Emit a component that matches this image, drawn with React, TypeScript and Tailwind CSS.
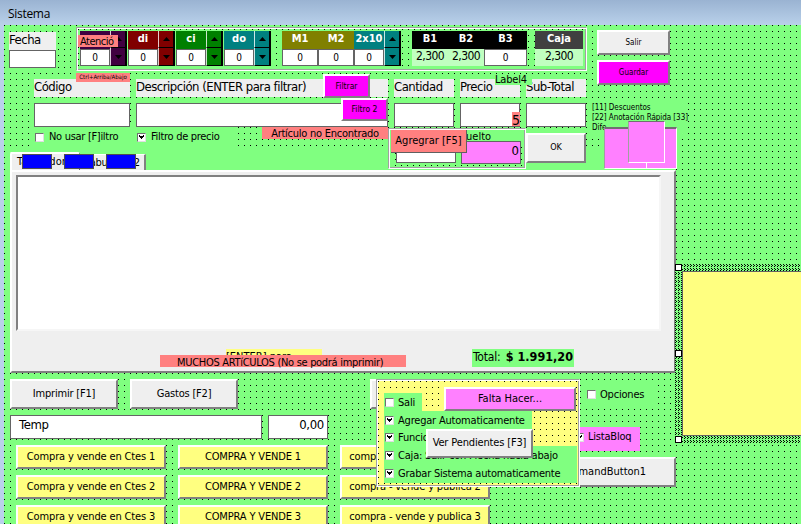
import type { ReactNode } from 'react';

const DOTS = 'bg-[conic-gradient(at_1px_1px,transparent_75%,#000_0)] bg-[length:6px_6px]';
const RAISED =
  'border-2 border-t-white border-l-white border-r-[#808080] border-b-[#808080]';
const ETCHED =
  'border border-[#a0a0a0] border-r-white border-b-white shadow-[inset_1px_1px_0_#fff,inset_-1px_-1px_0_#a0a0a0]';

function Button({ className, children }: { className: string; children?: ReactNode }) {
  return (
    <button className={`flex shrink-0 items-center justify-center whitespace-nowrap ${RAISED} ${className}`}>
      {children}
    </button>
  );
}

function Check({ on, className = '' }: { on?: boolean; className?: string }) {
  return (
    <span
      className={`flex h-[9px] w-[9px] shrink-0 items-center justify-center border border-t-[#707070] border-l-[#707070] border-r-[#e0e0e0] border-b-[#e0e0e0] bg-white ${className}`}
    >
      {on && (
        <svg width="5" height="5" viewBox="0 0 5 5" shapeRendering="crispEdges">
          <path d="M0 0h1v1h3v-1h1v2h-1v1h-1v1h-1v-1h-1v-1h-1z" fill="#000" />
        </svg>
      )}
    </span>
  );
}

function Spinner({ color }: { color: string }) {
  const half = 'flex w-full items-center justify-center border-b border-b-black border-l border-l-white/80 border-r-2 border-r-black';
  return (
    <div className={`flex h-[35px] w-[17px] shrink-0 flex-col ${color}`}>
      <div className={`h-[17px] ${half}`}>
        <svg width="7" height="4" viewBox="0 0 7 4"><path d="M0 4L3.5 0L7 4z" /></svg>
      </div>
      <div className={`h-[18px] ${half}`}>
        <svg width="7" height="4" viewBox="0 0 7 4"><path d="M0 0L3.5 4L7 0z" /></svg>
      </div>
    </div>
  );
}

function Cell({ label, value, color, className, plain }: { label: string; value: string; color: string; className: string; plain?: boolean }) {
  return (
    <div className={`flex shrink-0 flex-col ${className}`}>
      <div className={`h-[18px] text-center font-['DejaVu_Sans',sans-serif] text-[11px] leading-[15px] font-bold whitespace-nowrap text-white ${color}`}>
        {label}
      </div>
      {plain ? (
        <div className="h-[17px] bg-[#c0ffc0] text-center text-[12px] leading-[15px] tracking-[-0.6px]">{value}</div>
      ) : (
        <div className="h-[17px] border border-[#646464] bg-white text-center text-[10px] leading-[16px]">{value}</div>
      )}
    </div>
  );
}

function Field({ label, className }: { label: string; className: string }) {
  return (
    <div className={`flex shrink-0 flex-col gap-[6px] ${className}`}>
      <div className="h-[18px] bg-[#efefef] text-[13px] leading-[16px] tracking-[-0.5px] whitespace-nowrap">{label}</div>
      <div className="h-[24px] border border-[#646464] bg-white" />
    </div>
  );
}

function Option({ text, className, on = true }: { text: string; className: string; on?: boolean }) {
  return (
    <div className={`flex items-center gap-[4px] bg-[#80ff80] pl-px text-[11px] tracking-[-0.2px] whitespace-nowrap ${className}`}>
      <Check on={on} />
      <span className="pt-[2px]">{text}</span>
    </div>
  );
}

const trades = [
  ['Compra y vende en Ctes 1', 'COMPRA Y VENDE 1', 'compra - vende y publica 1'],
  ['Compra y vende en Ctes 2', 'COMPRA Y VENDE 2', 'compra - vende y publica 2'],
  ['Compra y vende en Ctes 3', 'COMPRA Y VENDE 3', 'compra - vende y publica 3'],
];

export default function App() {
  return (
    <div className="flex h-[524px] w-[801px] flex-col overflow-hidden bg-[#b9d1ea] font-['DejaVu_Sans_Condensed','DejaVu_Sans',sans-serif] text-black [font-stretch:condensed]">
      <header className="flex h-[25px] shrink-0 items-center bg-linear-to-b from-[#9ab3d2] to-[#b9d1ea] pt-[3px] pl-[8px] font-['Open_Sans',sans-serif] text-[12px] tracking-[-0.3px] [font-stretch:normal]">
        Sistema
      </header>

      <main className={`relative ml-[4px] h-[499px] overflow-hidden bg-[#80ff80] ${DOTS}`}>
        <section className="flex h-[54px] items-start">
          <div className="mt-[7px] ml-[5px] flex w-[47px] shrink-0 flex-col">
            <div className="h-[18px] bg-[#efefef] text-[13px] leading-[16px] tracking-[-0.5px]">Fecha</div>
            <div className="h-[18px] border border-[#646464] bg-white" />
          </div>

          <div className={`mt-[2px] ml-[20px] flex h-[44px] w-[511px] shrink-0 bg-[#80ff80] pt-[3px] pl-[3px] ${DOTS} bg-origin-content bg-position-[-2px_-2px] ${ETCHED}`}>
            <Cell label="" value="0" color="bg-[#400040]" className="w-[30px]" />
            <Spinner color="bg-[#400040]" />
            <Cell label="di" value="0" color="bg-[#800000]" className="ml-px w-[30px]" />
            <Spinner color="bg-[#800000]" />
            <Cell label="ci" value="0" color="bg-[#008000]" className="ml-px w-[30px]" />
            <Spinner color="bg-[#008000]" />
            <Cell label="do" value="0" color="bg-[#008080]" className="ml-px w-[30px]" />
            <Spinner color="bg-[#008080]" />
            <Cell label="M1" value="0" color="bg-[#808000]" className="ml-[11px] w-[36px]" />
            <Cell label="M2" value="0" color="bg-[#808000]" className="w-[36px]" />
            <Cell label="2x10" value="0" color="bg-[#008080]" className="w-[30px]" />
            <Spinner color="bg-[#008080]" />
            <Cell label="B1" value="2,300" color="bg-black" className="ml-[11px] w-[36px]" plain />
            <Cell label="B2" value="2,300" color="bg-black" className="w-[36px]" plain />
            <Cell label="B3" value="0" color="bg-black" className="w-[43px]" />
            <Cell label="Caja" value="2,300" color="bg-[#404040]" className="ml-[8px] w-[48px]" plain />
          </div>

          <div className="mt-[5px] ml-[10px] flex flex-col gap-[5px]">
            <Button className="h-[25px] w-[73px] bg-[#efefef] text-[8px]">Salir</Button>
            <Button className="h-[25px] w-[73px] bg-[#ff00ff] text-[8px]">Guardar</Button>
          </div>
        </section>

        <section className="flex h-[48px] gap-[6px] pl-[30px]">
          <Field label="Código" className="w-[96px]" />
          <Field label="Descripción (ENTER para filtrar)" className="w-[252px]" />
          <Field label="Cantidad" className="w-[60px]" />
          <Field label="Precio" className="w-[60px]" />
          <Field label="Sub-Total" className="w-[60px]" />
          <div className="mt-[24px] h-[36px] w-[96px] shrink-0 bg-[#80ff80] text-[8px] leading-[10px] tracking-[-0.05px] whitespace-nowrap">
            [11] Descuentos
            <br />
            [22] Anotación Rápida [33]
            <br />
            Dife
          </div>
        </section>

        <section className="flex h-[24px] pl-[30px]">
          <div className="flex w-[203px] items-center bg-[#80ff80] pb-[4px] pl-px text-[11px] tracking-[-0.3px] whitespace-nowrap">
            <Check />
            <span className="ml-[5px] w-[88px]">No usar [F]iltro</span>
            <Check on />
            <span className="ml-[5px]">Filtro de precio</span>
          </div>
        </section>

        <section className="ml-[6px] flex h-[222px] w-[666px] flex-col bg-[#80ff80]">
          <div className="flex h-[19px] items-end text-[11px] whitespace-nowrap">
            <div className="h-[18px] w-[70px] overflow-hidden rounded-t-[2px] border-t-2 border-r border-l-2 border-white border-r-[#646464] bg-[#efefef] pl-[5px] leading-[15px] tracking-[0.1px]">
              Tabulador
            </div>
            <div className="h-[16px] w-[66px] overflow-hidden border-t border-r-2 border-t-white border-r-[#808080] bg-[#efefef] pl-[6px] leading-[15px] tracking-[-0.35px]">
              Tabulador 2
            </div>
          </div>
          <div className="flex h-[203px] flex-col border-t-2 border-r-2 border-b-2 border-l-2 border-white border-r-[#808080] border-b-[#808080] bg-[#efefef] pt-[3px] pl-[4px]">
            <div className="h-[156px] w-[645px] border-2 border-t-[#808080] border-r-[#f6f6f6] border-b-[#f6f6f6] border-l-[#808080] bg-white" />
            <div className="mt-[18px] ml-[456px] flex h-[18px] w-[102px] items-center justify-between bg-[#80ff80] px-px pb-[2px] text-[12px] whitespace-nowrap">
              <span className="tracking-[-0.2px]">Total:</span>
              <b className="text-[12.5px]">$ 1.991,20</b>
            </div>
          </div>
        </section>

        <section className="flex h-[42px] gap-[12px] pt-[6px] pl-[6px] text-[11px] tracking-[-0.2px]">
          <Button className="h-[30px] w-[108px] bg-[#efefef]">Imprimir [F1]</Button>
          <Button className="h-[30px] w-[108px] bg-[#efefef]">Gastos [F2]</Button>
          <Button className="ml-[120px] h-[30px] w-[108px] bg-[#efefef]" />
        </section>

        <section className="flex h-[30px] gap-[6px] pl-[6px] text-[13px] leading-[18px]">
          <div className="h-[24px] w-[252px] border border-[#646464] bg-white pl-[8px] tracking-[-0.3px]">Temp</div>
          <div className="h-[24px] w-[60px] border border-[#646464] bg-white pr-[3px] text-right tracking-[-0.3px]">0,00</div>
        </section>

        <section className="flex flex-col gap-[6px] pl-[12px] text-[11px] tracking-[-0.15px]">
          {trades.map((row) => (
            <div key={row[0]} className="flex gap-[12px]">
              {row.map((name) => (
                <Button key={name} className="h-[24px] w-[150px] bg-[#ffff80] pt-px">{name}</Button>
              ))}
            </div>
          ))}
        </section>

        {/* Controls dropped freely over the form */}
        <div className="absolute top-[10px] left-[74px] h-[12px] w-[40px] bg-[#ff8080] pl-[2px] text-[11px] leading-[13px] tracking-[-0.5px]">Atenció</div>
        <div className="absolute top-[48px] left-[72px] h-[9px] w-[54px] bg-[#ff8080] text-center text-[6px] leading-[8px] whitespace-nowrap">Ctrl+Arriba/Abajo</div>
        <Button className="absolute top-[49px] left-[319px] h-[24px] w-[47px] bg-[#ff00ff] text-[8.5px]">Filtrar</Button>
        <Button className="absolute top-[73px] left-[337px] h-[23px] w-[47px] bg-[#ff00ff] text-[8.5px]">Filtro 2</Button>
        <div className="absolute top-[50px] left-[491px] h-[10px] w-[37px] bg-[#80ff80] text-[11px] leading-[10px] tracking-[-0.2px]">Label4</div>
        <div className="absolute top-[87px] left-[508px] h-[14px] w-[8px] bg-[#ff8080] text-[14px] leading-[17px]">5</div>
        <div className="absolute top-[102px] left-[258px] h-[12px] w-[126px] bg-[#ff8080] text-center text-[11px] leading-[14px] tracking-[-0.25px] whitespace-nowrap">Artículo no Encontrado</div>

        <div className={`absolute top-[103px] left-[384px] h-[41px] w-[138px] bg-[#80ff80] ${DOTS} ${ETCHED}`}>
          <div className="absolute top-[12px] left-[7px] h-[22px] w-[60px] border border-[#646464] bg-white" />
          <div className="absolute top-[1px] left-[71px] h-[12px] w-[62px] bg-[#80ff80] text-[11px] leading-[14px]">Vuelto</div>
          <div className="absolute top-[12px] left-[72px] h-[23px] w-[60px] border border-[#646464] bg-[#ff80ff] pr-px text-right text-[13px] leading-[17px]">0</div>
          <div className="absolute top-px left-[2px] flex h-[23px] w-[76px] items-center justify-center border-r border-b border-[#606060] bg-[#ff8080] text-[11px] whitespace-nowrap">Agregrar [F5]</div>
        </div>
        <Button className="absolute top-[108px] left-[522px] h-[30px] w-[60px] bg-[#efefef] text-[9px]">OK</Button>

        <div className="absolute top-[102px] left-[600px] h-[42px] w-[73px] border border-t-2 border-t-[#707070] border-r-white border-b-white border-l-[#a0a0a0] bg-[#ff80ff]">
          <div className="absolute bottom-0 left-[41px] h-[5px] w-px bg-white" />
          <div className="absolute -top-[8px] left-[23px] h-[42px] w-[37px] border border-t-[#707070] border-r-white border-b-white border-l-[#a0a0a0] bg-[#ff80ff]" />
        </div>

        <div className="absolute top-[129px] left-[18px] flex gap-[12px]">
          <div className="h-[15px] w-[30px] border border-[#505050] bg-[#0000ff]" />
          <div className="h-[15px] w-[30px] border border-[#505050] bg-[#0000ff]" />
          <div className="h-[15px] w-[30px] border border-[#505050] bg-[#0000ff]" />
        </div>

        <div className="absolute top-[324px] left-[222px] h-[12px] w-[96px] bg-[#ffff80] text-[11px] leading-[15px]">[ENTER] para</div>
        <div className="absolute top-[330px] left-[156px] h-[12px] w-[246px] bg-[#ff8080] pl-[17px] text-[11px] leading-[15px] tracking-[-0.3px] whitespace-nowrap">MUCHOS ARTíCULOS (No se podrá imprimir)</div>

        <Option text="Opciones" on={false} className="absolute top-[359px] left-[582px] h-[21px] w-[68px]" />
        <div className="absolute top-[402px] left-[570px] flex h-[24px] w-[66px] items-center gap-[4px] bg-[#ff80ff] pb-[3px] pl-px text-[11px] tracking-[-0.2px]">
          <Check on />
          ListaBloq
        </div>
        <Button className="absolute top-[432px] left-[522px] h-[30px] w-[150px] bg-[#efefef] text-[11px]">CommandButton1</Button>

        <div className={`absolute top-[354px] left-[372px] h-[108px] w-[204px] bg-[#ffff80] ${DOTS} bg-position-[1px_1px] ${ETCHED}`}>
          <div className="flex flex-col pt-[13px] pl-[7px]">
            <Option text="Sali" on={false} className="h-[18px] w-[38px]" />
            <Option text="Agregar Automaticamente" className="h-[18px] w-[148px]" />
            <Option text="Funciones" className="h-[17px] w-[148px]" />
            <Option text="Caja: Salir con Flecha hacia abajo" className="h-[18px] w-[193px]" />
            <Option text="Grabar Sistema automaticamente" className="h-[19px] w-[193px]" />
          </div>
          <Button className="absolute top-[7px] left-[67px] h-[24px] w-[132px] bg-[#ff80ff] text-[11px]">Falta Hacer...</Button>
          <Button className="absolute top-[49px] left-[49px] h-[29px] w-[107px] bg-[#efefef] text-[11px] tracking-[-0.15px]">Ver Pendientes [F3]</Button>
        </div>

        <div className="absolute top-[239px] left-[671px] h-[179px] w-[150px] bg-[#80ff80] bg-[conic-gradient(at_1px_1px,transparent_75%,#000_0),conic-gradient(at_1px_1px,transparent_75%,#000_0)] bg-[length:3px_2px,3px_4px] bg-[position:0_0,1px_1px] py-[7px] pl-[7px]">
          <div className="h-full w-full border border-[#646464] bg-[#ffff80]" />
          <div className="absolute top-0 left-0 flex h-[179px] flex-col justify-between">
            <div className="h-[7px] w-[7px] border border-black bg-white" />
            <div className="h-[7px] w-[7px] border border-black bg-white" />
            <div className="h-[7px] w-[7px] border border-black bg-white" />
          </div>
        </div>
      </main>
    </div>
  );
}
